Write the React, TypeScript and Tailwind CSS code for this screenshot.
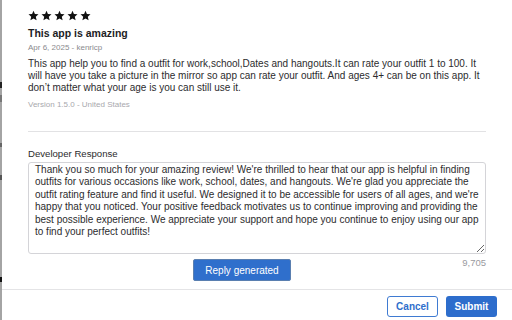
const reviewBody =
  "This app help you to find a outfit for work,school,Dates and hangouts.It can rate your outfit 1 to 100. It will have you take a picture in the mirror so app can rate your outfit. And ages 4+ can be on this app. It don\u2019t matter what your age is you can still use it."

const replyText =
  "Thank you so much for your amazing review! We're thrilled to hear that our app is helpful in finding outfits for various occasions like work, school, dates, and hangouts. We're glad you appreciate the outfit rating feature and find it useful. We designed it to be accessible for users of all ages, and we're happy that you noticed. Your positive feedback motivates us to continue improving and providing the best possible experience. We appreciate your support and hope you continue to enjoy using our app to find your perfect outfits!"

function Star() {
  return (
    <svg width="11" height="11" viewBox="0 0 24 24" className="shrink-0">
      <path
        d="M12 1.5l3.1 7.2 7.8.7-5.9 5.2 1.8 7.7L12 18.3l-6.8 4 1.8-7.7-5.9-5.2 7.8-.7z"
        fill="#111111"
      />
    </svg>
  )
}

export default function App() {
  return (
    <div
      className="w-[512px] h-[320px] flex bg-white overflow-hidden"
      style={{ fontFamily: '"Liberation Sans", Arial, sans-serif' }}
    >
      {/* window edge behind the sheet */}
      <div className="w-[2px] shrink-0 bg-[#a4a4a4] flex flex-col">
        <div className="h-[82px]" />
        <div className="h-[6px] bg-[#222]" />
        <div className="h-[7px]" />
        <div className="h-[7px] bg-[#777]" />
        <div className="h-[41px]" />
        <div className="h-[4px] bg-[#666]" />
        <div className="h-[28px]" />
        <div className="h-[5px] bg-[#555]" />
        <div className="h-[97px]" />
        <div className="h-[5px] bg-[#111]" />
      </div>

      <div className="flex-1 flex flex-col">
        <div className="px-[26px] flex flex-col">
          <div className="flex gap-[2px] pt-[10px]">
            <Star />
            <Star />
            <Star />
            <Star />
            <Star />
          </div>
          <h2 className="mt-[6px] text-[10.5px] leading-[13px] font-bold text-[#1d1d1f]">
            This app is amazing
          </h2>
          <div className="mt-[3px] text-[8px] leading-[10px] text-[#8a8a8e]">
            Apr 6, 2025 - kenricp
          </div>
          <p className="mt-[5px] text-[10px] leading-[12px] text-[#2c2c2e]">{reviewBody}</p>
          <div className="mt-[6px] text-[8px] leading-[10px] text-[#a8a8ad]">
            Version 1.5.0 - United States
          </div>
          <div className="mt-[21px] h-px bg-[#e2e2e4]" />
          <label className="mt-[16px] text-[9.6px] leading-[12px] text-[#2c2c2e]">
            Developer Response
          </label>
          <textarea
            readOnly
            value={replyText}
            className="mt-[2px] h-[92px] w-full border border-[#d4d4d8] rounded-[3px] px-[6px] pt-px text-[10px] leading-[12.4px] text-[#2c2c2e] outline-none"
          />
          <div className="flex items-start">
            <button className="ml-[165px] mt-[5px] w-[98px] h-[22px] rounded-[2px] bg-[#2f6fcc] border border-[#5a7fb0] text-white text-[10px]">
              Reply generated
            </button>
            <span className="ml-auto mt-[3px] text-[9.5px] leading-[12px] text-[#9a9aa0]">9,705</span>
          </div>
        </div>

        <div className="mt-[8px] h-px bg-[#e4e4e6]" />

        <div className="flex justify-end gap-[8px] pt-[6px] pr-[15px]">
          <button className="w-[51px] h-[21px] rounded-[3px] border border-[#3f7bd2] text-[#2f6fcc] text-[10px] font-bold bg-white">
            Cancel
          </button>
          <button className="w-[51px] h-[21px] rounded-[3px] bg-[#2d6dcc] text-white text-[10px] font-bold">
            Submit
          </button>
        </div>
      </div>
    </div>
  )
}
